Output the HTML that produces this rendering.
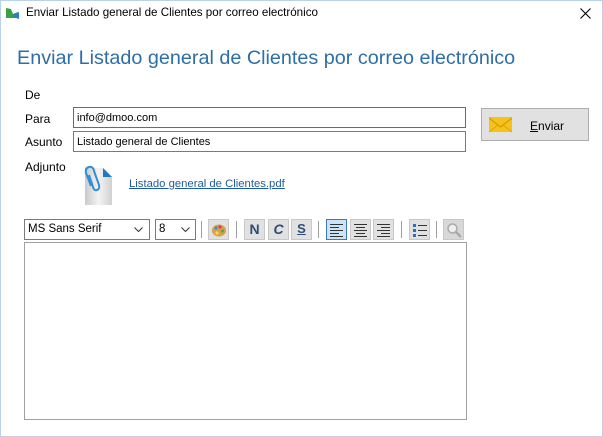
<!DOCTYPE html>
<html><head><meta charset="utf-8"><style>
*{box-sizing:border-box;margin:0;padding:0}
body{width:603px;height:437px;overflow:hidden;background:#fff;font-family:"Liberation Sans",sans-serif;position:relative}
.win{position:absolute;left:0;top:0;width:603px;height:437px;border:1px solid #b9d1ea;border-top:1px solid #b9d1ea}
.a{position:absolute}
.t{font-size:12px;color:#000;white-space:nowrap}
.inp{position:absolute;background:#fff;font-size:11px;padding:4px 0 0 3px}
.btn{position:absolute;top:219px;width:21px;height:21px;background:#e1e1e1;border:1px solid #c8c8c8}
.sep{position:absolute;top:221px;width:1px;height:17px;background:#a0a0a0}
.combo{position:absolute;top:219px;height:21px;border:1px solid #7a7a7a;background:#fff;font-size:11.5px;padding:3px 0 0 3px}
.lines{position:absolute;left:3px;top:4px;width:13px}
.lines i{display:block;height:1px;background:#333;margin-bottom:2px}
</style></head><body>
<div class="win"></div>
<svg class="a" style="left:4px;top:5px" width="16" height="16"><path d="M2 3 L7 4 L9 9 L14 7 L14 13 L2 13Z" fill="#3aa046"/><path d="M9 9 L15 7 L15 14 L9 12Z" fill="#2d7ec6"/></svg>
<div class="a t" style="left:26px;top:6px;font-size:11.6px">Enviar Listado general de Clientes por correo electrónico</div>
<svg class="a" style="left:580px;top:8px" width="11" height="11"><path d="M0.5 0.5L10.5 10.5M10.5 0.5L0.5 10.5" stroke="#000" stroke-width="1.1"/></svg>
<div class="a" style="left:17px;top:47px;font-size:19.8px;color:#2e6ea6;white-space:nowrap">Enviar Listado general de Clientes por correo electrónico</div>
<div class="a t" style="left:25px;top:88px">De</div>
<div class="a t" style="left:25px;top:112px">Para</div>
<div class="a t" style="left:25px;top:135px">Asunto</div>
<div class="a t" style="left:25px;top:160px">Adjunto</div>
<div class="inp" style="left:73px;top:107px;width:393px;height:21px;border:1px solid #2f7bb3">info@dmoo.com</div>
<div class="inp" style="left:73px;top:131px;width:393px;height:21px;border:1px solid #7a7a7a">Listado general de Clientes</div>
<div class="a" style="left:481px;top:108px;width:108px;height:33px;background:#e1e1e1;border:1px solid #adadad"></div>
<svg class="a" style="left:489px;top:117px" width="24" height="16"><rect x="0" y="0" width="23" height="15" rx="1" fill="#f5c21b"/><path d="M0 1 L11.5 10 L23 1" fill="none" stroke="#d69a00" stroke-width="1.2"/><path d="M0 15 L9 8 M23 15 L14 8" stroke="#e0a800" stroke-width="1"/></svg>
<div class="a t" style="left:530px;top:119px"><u>E</u>nviar</div>
<svg class="a" style="left:82px;top:164px" width="32" height="42"><defs><linearGradient id="g" x1="0" x2="1"><stop offset="0" stop-color="#c9c9c9"/><stop offset=".5" stop-color="#f4f4f4"/><stop offset="1" stop-color="#d0d0d0"/></linearGradient></defs><path d="M3 4 H21 L30 13 V41 H3Z" fill="url(#g)"/><path d="M21 4 L30 13 H21Z" fill="#1e78c8"/><path d="M9 22 L4 9 Q3 4 7 3 Q11 2 12 7 L17 21 Q18 25 15 26 Q12 27 11 23 L7 11" fill="none" stroke="#2f8fd6" stroke-width="2"/></svg>
<div class="a" style="left:129px;top:178px;font-size:11.3px;color:#1f5c9e;text-decoration:underline;white-space:nowrap">Listado general de Clientes.pdf</div>
<div class="combo" style="left:24px;width:126px">MS Sans Serif<svg class="a" style="right:6px;top:7px" width="9" height="6"><path d="M0.5 0.5L4.5 4.5L8.5 0.5" fill="none" stroke="#333"/></svg></div>
<div class="combo" style="left:155px;width:41px">8<svg class="a" style="right:5px;top:7px" width="9" height="6"><path d="M0.5 0.5L4.5 4.5L8.5 0.5" fill="none" stroke="#333"/></svg></div>
<div class="sep" style="left:201px"></div>
<div class="btn" style="left:208px"><svg class="a" style="left:2px;top:2px" width="16" height="16"><ellipse cx="8" cy="8.5" rx="7" ry="6" fill="#d8a050"/><circle cx="5" cy="6" r="1.6" fill="#3a8de0"/><circle cx="9" cy="5" r="1.6" fill="#e04040"/><circle cx="11.5" cy="9" r="1.6" fill="#50b040"/><circle cx="6" cy="11" r="1.6" fill="#f0e040"/></svg></div>
<div class="sep" style="left:236px"></div>
<div class="btn" style="left:244px;font-weight:bold;font-size:14px;color:#2c4d7a;text-align:center;line-height:19px">N</div>
<div class="btn" style="left:268px;font-weight:bold;font-style:italic;font-size:14px;color:#2c4d7a;text-align:center;line-height:19px">C</div>
<div class="btn" style="left:291px;font-weight:bold;font-size:13px;color:#2c4d7a;text-align:center;line-height:17px;text-decoration:underline">S</div>
<div class="sep" style="left:318px"></div>
<div class="btn" style="left:326px;background:#cce4f7;border-color:#3a7bbf"><div class="lines"><i></i><i style="width:9px"></i><i></i><i style="width:9px"></i><i></i></div></div>
<div class="btn" style="left:350px"><div class="lines"><i></i><i style="width:9px;margin-left:2px"></i><i></i><i style="width:9px;margin-left:2px"></i><i></i></div></div>
<div class="btn" style="left:373px"><div class="lines"><i></i><i style="width:9px;margin-left:4px"></i><i></i><i style="width:9px;margin-left:4px"></i><i></i></div></div>
<div class="sep" style="left:401px"></div>
<div class="btn" style="left:409px"><svg class="a" style="left:3px;top:3px" width="14" height="14"><rect x="0" y="1" width="3" height="3" fill="#2a6fc0"/><rect x="0" y="6" width="3" height="3" fill="#2a6fc0"/><rect x="0" y="11" width="3" height="3" fill="#2a6fc0"/><path d="M5 2.5H14M5 7.5H14M5 12.5H14" stroke="#333"/></svg></div>
<div class="sep" style="left:436px"></div>
<div class="btn" style="left:443px;background:#d8d8d8"><svg class="a" style="left:2px;top:2px" width="16" height="16"><circle cx="6.5" cy="6.5" r="4.5" fill="#eee" stroke="#aaa" stroke-width="1.5"/><path d="M10 10L15 15" stroke="#aaa" stroke-width="2.5"/></svg></div>
<div class="a" style="left:24px;top:242px;width:443px;height:178px;border:1px solid #a0a0a0;background:#fff"></div>
</body></html>
